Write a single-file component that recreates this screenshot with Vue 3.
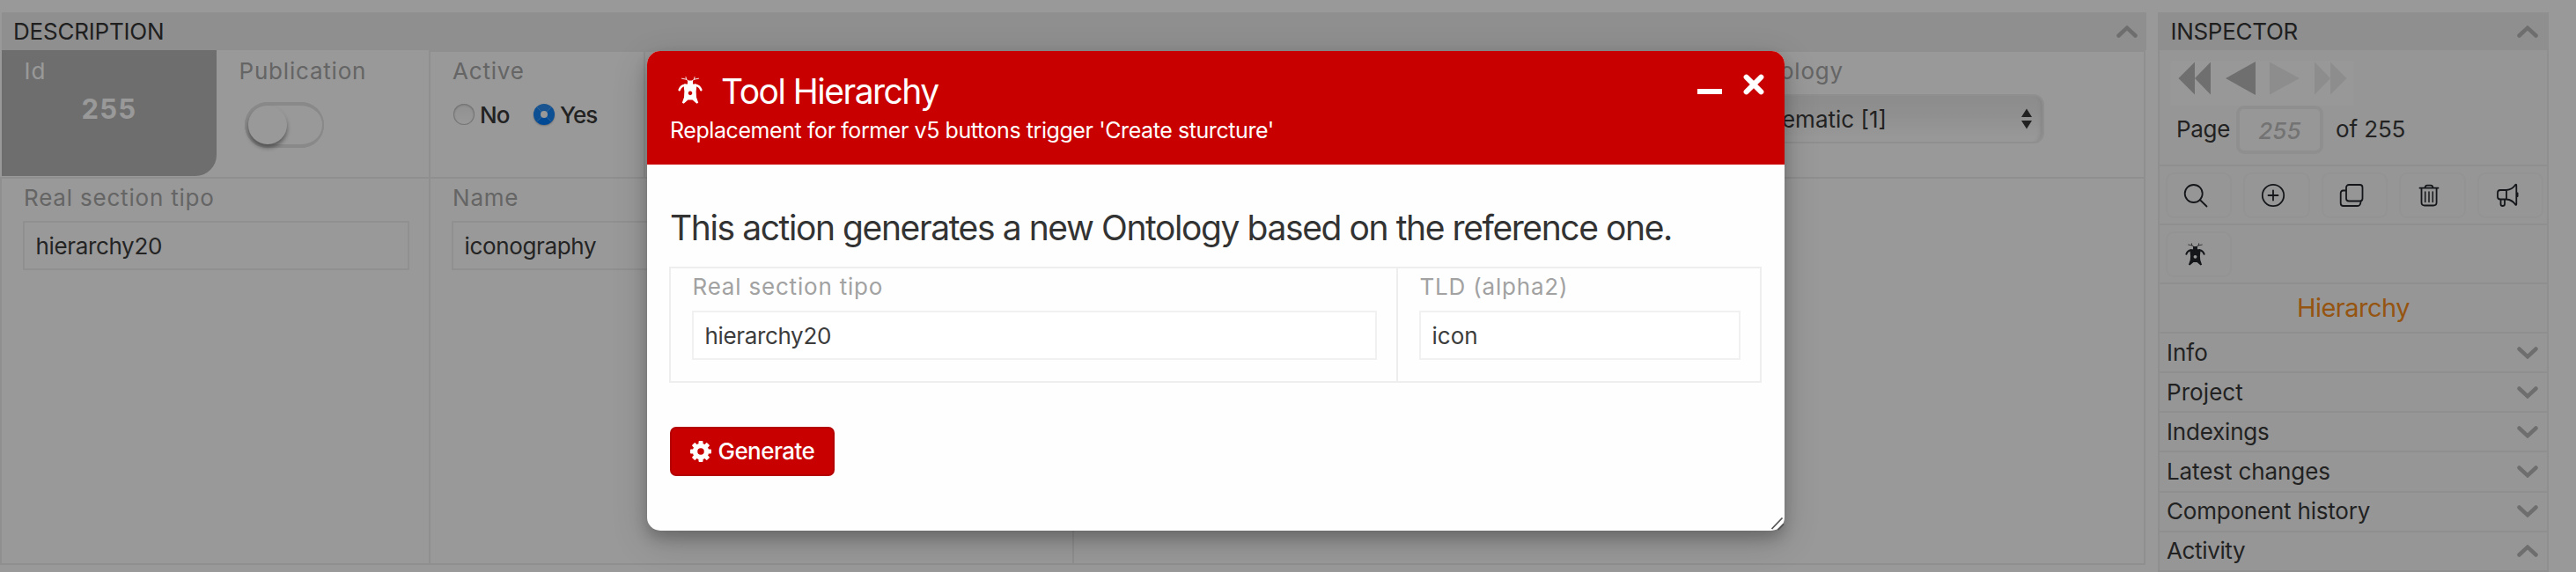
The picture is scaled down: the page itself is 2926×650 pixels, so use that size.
<script setup>
const sections = [
  { name: 'Info', open: false, ls: 0 },
  { name: 'Project', open: false, ls: 0.07 },
  { name: 'Indexings', open: false, ls: -0.2 },
  { name: 'Latest changes', open: false, ls: -0.1 },
  { name: 'Component history', open: false, ls: -0.21 },
  { name: 'Activity', open: true, ls: -0.36 },
]
const bugBody =
  'M11 4.5h6v4h3.5q1 0 .8 2q-1.2 7-.3 13l2.2 6.2-1.8 1-4.9-4.2h-5L6.6 30.7l-1.8-1L7 23.5q.9-6-.3-13q-.2-2 .8-2H11zM14 16.6a2.3 2.3 0 1 0 .01 0z'
const bugLimbs = 'M8 9.8Q3.2 10.600 1.700 15.200M20 9.8Q24.800 10.600 26.300 15.200'
const bugAntennae = 'M4.500 2.200L9.500 3.200L12 5M9 .6L9.500 3.200M23.500 2.200L18.500 3.200L16 5M19 .6L18.500 3.200'
const cogTeeth = [0, 45, 90, 135, 180, 225, 270, 315]
</script>

<template>
  <div class="page">
    <div class="layout">
      <section class="panel">
        <header class="panel-head">
          <h2 class="panel-title">DESCRIPTION</h2>
          <svg class="chevron" viewBox="0 0 24 14"><path d="M2.500 11.500L12 2.700L21.500 11.500" /></svg>
        </header>

        <div class="row row-first">
          <div class="cell-id">
            <div class="id-box">
              <div class="id-label">Id</div>
              <div class="id-value">255</div>
            </div>
            <div class="publication">
              <div class="label">Publication</div>
              <div class="toggle"><span class="knob"></span></div>
            </div>
          </div>
          <div class="cell cell-active">
            <div class="label">Active</div>
            <div class="radios">
              <span class="radio"></span><span class="radio-text no">No</span>
              <span class="radio checked"></span><span class="radio-text yes">Yes</span>
            </div>
          </div>
          <div class="cell cell-typology">
            <div class="label typology-label">Typology</div>
            <div class="select">
              <span class="select-value">Thematic [1]</span>
              <svg class="select-arrows" viewBox="0 0 12 24"><path d="M6 .5L12 10H0zM6 23.500L12 14H0z" /></svg>
            </div>
          </div>
        </div>

        <div class="row row-second">
          <div class="cell cell-tipo">
            <div class="label">Real section tipo</div>
            <div class="input tight">hierarchy20</div>
          </div>
          <div class="cell cell-name">
            <div class="label">Name</div>
            <div class="input tight">iconography</div>
          </div>
          <div class="cell cell-rest"></div>
        </div>
      </section>

      <aside class="inspector">
        <header class="inspector-head">
          <h2 class="inspector-title">INSPECTOR</h2>
          <svg class="chevron" viewBox="0 0 24 14"><path d="M2.500 11.500L12 2.700L21.500 11.500" /></svg>
        </header>
        <div class="paginator">
          <div class="nav">
            <svg width="208" height="53" viewBox="0 0 208 53">
              <path class="nav-on" d="M8.500 20L27 1.500V38.500zM27 20L45 1.500V38.500zM62 20L96 1V39z" />
              <path class="nav-off" d="M146 20L112 1.500V38.500zM181 20L163 1.500V38.500zM199.500 20L181 1.500V38.500z" />
            </svg>
          </div>
          <div class="page-line">
            <span class="page-word">Page</span>
            <span class="page-input">255</span>
            <span class="page-total">of 255</span>
          </div>
        </div>
        <div class="tools">
          <div class="tool">
            <svg viewBox="0 0 28 28"><circle cx="11.700" cy="12" r="10" /><path d="M18.800 19L26.500 26.500" /></svg>
          </div>
          <div class="tool">
            <svg viewBox="0 0 28 28"><circle cx="14" cy="14" r="12.200" /><path d="M14 8.500V19.500M8.500 14H19.500" /></svg>
          </div>
          <div class="tool">
            <svg viewBox="0 0 28 28">
              <rect x="8" y="2" width="18.500" height="18.500" rx="3" />
              <path d="M7 8.500H4.500Q1.700 8.500 1.700 11.500V23Q1.700 26 4.700 26H21Q24 26 24.500 21.500" />
            </svg>
          </div>
          <div class="tool">
            <svg viewBox="0 0 28 28">
              <path d="M3.500 5.700H24.500M9.500 5Q10 2.700 12 2.700H16Q18 2.700 18.500 5M5.500 6V22Q5.500 25.500 9 25.500H19Q22.600 25.500 22.600 22V6" />
              <path class="thin" d="M9.700 10V21.500M14 10V21.500M18.300 10V21.500" />
            </svg>
          </div>
          <div class="tool">
            <svg viewBox="0 0 28 28">
              <path d="M13 8H6Q3 8 3 11V15.500Q3 18.500 6 18.500H13ZM13 8Q19.500 7.500 23.200 2Q24.300 1 24.300 3V23.500Q24.300 25.500 23.200 24.500Q19.500 19 13 18.500M6.500 18.500V24Q6.500 26 8.500 26Q11 26 11 24V18.500M25.600 11.500V15" />
            </svg>
          </div>
        </div>
        <div class="tools second">
          <div class="tool">
            <svg class="bug-dark" viewBox="0 0 28 31">
              <path class="fill" fill-rule="evenodd" :d="bugBody" />
              <path class="limb" :d="bugLimbs" />
              <path class="hair" :d="bugAntennae" />
            </svg>
          </div>
        </div>
        <div class="section-name">Hierarchy</div>
        <div v-for="s in sections" :key="s.name" class="item">
          <span :style="{ letterSpacing: s.ls + 'px' }">{{ s.name }}</span>
          <svg class="chevron" viewBox="0 0 24 14">
            <path :d="s.open ? 'M2.500 11.500L12 2.700L21.500 11.500' : 'M2.500 2.500L12 11.300L21.500 2.500'" />
          </svg>
        </div>
      </aside>
    </div>

    <div class="overlay">
      <div class="modal">
        <header class="modal-head">
          <div class="modal-titles">
            <div class="modal-title-line">
              <svg class="bug-light" viewBox="0 0 28 31">
                <path class="fill" fill-rule="evenodd" :d="bugBody" />
                <path class="limb" :d="bugLimbs" />
                <path class="hair" :d="bugAntennae" />
              </svg>
              <h1 class="modal-title">Tool Hierarchy</h1>
            </div>
            <p class="modal-sub">Replacement for former v5 buttons trigger 'Create sturcture'</p>
          </div>
          <div class="window-controls">
            <span class="minimize"></span>
            <svg class="close" viewBox="0 0 24 24"><path d="M3.600 3.600L20.400 20.400M20.400 3.600L3.600 20.400" /></svg>
          </div>
        </header>
        <div class="modal-body">
          <h3 class="statement">This action generates a new Ontology based on the reference one.</h3>
          <div class="fields">
            <div class="field field-tipo">
              <div class="label">Real section tipo</div>
              <div class="input tight">hierarchy20</div>
            </div>
            <div class="field field-tld">
              <div class="label">TLD (alpha2)</div>
              <div class="input">icon</div>
            </div>
          </div>
          <button class="generate">
            <svg class="cog" viewBox="0 0 24 24">
              <circle cx="12" cy="12" r="6.500" />
              <rect v-for="a in cogTeeth" :key="a" x="9.500" y="0" width="5" height="4.500" rx="1" :transform="`rotate(${a} 12 12)`" />
            </svg>
            <span>Generate</span>
          </button>
        </div>
        <svg class="resizer" viewBox="0 0 16 16"><path d="M1.500 14L13.500 1.500M8.500 15L15 8.500" /></svg>
      </div>
    </div>
  </div>
</template>

<style>
body {
  background: #999;
}
</style>

<style scoped>
.page,
.page * {
  box-sizing: border-box;
}
.page {
  position: relative;
  width: 2926px;
  height: 650px;
  overflow: hidden;
  background: #fff;
  color: #393939;
  font: 400 26px/31px Inter, 'Liberation Sans', sans-serif;
}
h1,
h2,
h3,
p {
  margin: 0;
  font-weight: 400;
}
.layout {
  display: flex;
  gap: 13px;
  padding-top: 14px;
}
.panel {
  width: 2438px;
}
.panel-head {
  display: flex;
  justify-content: space-between;
  height: 43px;
  margin-left: 2px;
  padding: 6px 10px 0 13px;
  background: #eee;
}
.panel-title,
.inspector-title {
  font-size: 26px;
  letter-spacing: -0.2px;
  color: #353535;
}
.inspector-title {
  letter-spacing: -0.3px;
}
.chevron {
  width: 24px;
  height: 14px;
  margin-top: 9px;
  fill: none;
  stroke: #b8b8b8;
  stroke-width: 4.500;
  stroke-linecap: round;
}
.row {
  display: flex;
  width: 2437px;
}
.row-first {
  height: 146px;
  border-bottom: 2px solid #eee;
}
.row-second {
  height: 439px;
  border-left: 2px solid #eee;
  border-bottom: 2px solid #eee;
}
.cell {
  padding: 6px 24px 0;
  border-right: 2px solid #eee;
}
.label {
  padding-left: 1px;
  color: #a8a8a8;
  letter-spacing: 0.8px;
  white-space: nowrap;
}
.input {
  height: 56px;
  margin-top: 11px;
  padding: 11px 12.500px 0;
  border: 2px solid #f1f1f1;
  color: #3c3c3c;
}
.tight {
  letter-spacing: -0.35px;
}
.cell-id {
  display: flex;
  width: 489px;
  padding-left: 2px;
  border-right: 2px solid #eee;
}
.id-box {
  width: 244px;
  height: 143px;
  padding-top: 8px;
  border-radius: 0 0 24px 0;
  background: #b8b8b8;
  color: #fff;
}
.id-label {
  padding-left: 25.500px;
  letter-spacing: 1px;
}
.id-value {
  margin-top: 9px;
  font-size: 31px;
  font-weight: 700;
  line-height: 37px;
  letter-spacing: 1.200px;
  text-align: center;
}
.publication {
  padding: 8px 0 0 24.500px;
}
.toggle {
  width: 90px;
  height: 52px;
  margin: 20px 0 0 7.500px;
  padding: 4px;
  border-radius: 26px;
  box-shadow: inset 1px 0 0 3px #e4e4e4, inset 0 4px #e4e4e4, inset 0 -4px #e4e4e4;
}
.knob {
  display: block;
  width: 44px;
  height: 44px;
  border-radius: 50%;
  background: #fff;
  box-shadow: 0 4px 5px rgba(0, 0, 0, 0.4);
}
.cell-active {
  width: 244px;
  border-top: 2px solid #eee;
}
.radios {
  display: flex;
  margin-top: 19px;
  padding-left: 2px;
}
.radio {
  width: 24px;
  height: 24px;
  margin-top: 3px;
  border-radius: 50%;
  background: linear-gradient(#f2f2f2, #fff);
  box-shadow: inset 0 0 0 1px #c4c4c4, inset 0 1px 3px #bbb;
}
.radio.checked {
  border: 8px solid #0f80f0;
  border-color: #2a8df0 #1484f5 #007af8;
  background: #fff;
  box-shadow: 0 1px 2px #bbb;
}
.radio-text {
  padding-left: 6px;
  font-weight: 500;
  letter-spacing: -0.9px;
}
.no {
  width: 67px;
}
.cell-typology {
  width: 1704px;
  border-top: 2px solid #eee;
  padding: 6px 0 0;
}
.typology-label {
  width: 1361px;
  text-align: right;
}
.select {
  display: flex;
  width: 340px;
  height: 56px;
  margin: 11px 0 0 1249px;
  padding: 11px 0 0;
  border: 2px solid #eee;
  border-radius: 12px;
  background: linear-gradient(#ebebeb, #eee 35%, #fbfbfb 80%, #fff);
  box-shadow: inset -6px 0 5px -4px #ddd;
}
.select-value {
  width: 159px;
  text-align: right;
  white-space: nowrap;
}
.select-arrows {
  width: 12px;
  height: 24px;
  margin: 3px 0 0 153px;
  fill: #3a3a3a;
}
.cell-tipo {
  width: 487px;
  padding-right: 22px;
}
.cell-name {
  width: 731px;
}
.cell-rest {
  flex: 1;
}

.inspector {
  width: 444px;
  height: 636px;
  border: 0 solid #eee;
  border-width: 0 2px;
  background: #fbfbfb;
}
.inspector-head {
  display: flex;
  justify-content: space-between;
  height: 43px;
  margin: 0 -2px;
  padding: 6px 12px 0 14.500px;
  background: #eee;
}
.paginator {
  height: 132px;
  padding: 12px 0 0 13px;
  border-bottom: 2px solid #eee;
}
.nav {
  width: 208px;
  height: 51px;
  background: #fdfdfd;
}
.nav svg {
  display: block;
}
.nav-on {
  fill: #b9b9b9;
}
.nav-off {
  fill: #ebebeb;
}
.page-line {
  display: flex;
  padding-left: 6px;
}
.page-word {
  width: 68px;
  margin-top: 11px;
  letter-spacing: -0.3px;
}
.page-input {
  width: 99px;
  height: 55px;
  padding-top: 9px;
  border: 4px solid #efefef;
  border-radius: 9px;
  background: #fcfcfc;
  color: #c0c0c0;
  font-style: italic;
  font-weight: 500;
  letter-spacing: 0.2px;
  text-align: center;
}
.page-total {
  margin: 11px 0 0 14px;
  letter-spacing: -0.12px;
}
.tools {
  display: flex;
  gap: 13px;
  height: 67px;
  padding: 7px 0 0 6.500px;
  border-bottom: 2px solid #eee;
}
.tool {
  width: 75.500px;
  height: 52px;
  padding: 10px 0 0 18px;
  border: 2px solid #f5f5f5;
  border-radius: 9px;
}
.tool svg {
  display: block;
  width: 28px;
  height: 28px;
  fill: none;
  stroke: #22262b;
  stroke-width: 1.800;
  stroke-linecap: round;
  stroke-linejoin: round;
}
.tool .thin {
  stroke-width: 1.500;
}
.tool .bug-dark {
  width: 23px;
  height: 26px;
  margin: 1px 0 0 2.500px;
}
.tool .bug-dark .fill {
  fill: #22262b;
  stroke: none;
}
.tool .limb,
.bug-light .limb {
  stroke-width: 2.600;
}
.tool .hair,
.bug-light .hair {
  stroke-width: 0.900;
}
.section-name {
  height: 56px;
  padding: 9px 0 0;
  border-bottom: 2px solid #eee;
  color: #f98d1b;
  font-size: 29px;
  line-height: 35px;
  letter-spacing: -0.500px;
  text-align: center;
}
.item {
  display: flex;
  justify-content: space-between;
  height: 45.150px;
  padding: 5.500px 10px 0 8px;
  border-bottom: 2px solid #eee;
}

.overlay {
  position: absolute;
  inset: 0;
  padding: 58px 0 0 735px;
  background: rgba(0, 0, 0, 0.4);
}
.modal {
  position: relative;
  width: 1292px;
  height: 545px;
  border-radius: 15px;
  background: #fefefe;
  box-shadow: 0 8px 16px rgba(0, 0, 0, 0.2), 0 12px 40px rgba(0, 0, 0, 0.19);
}
.modal-head {
  display: flex;
  justify-content: space-between;
  height: 129px;
  padding: 22px 23px 0 26px;
  border-radius: 15px 15px 0 0;
  background: #c80000;
  color: #fff;
}
.modal-title-line {
  display: flex;
}
.bug-light {
  width: 28px;
  height: 31px;
  margin: 7px 21px 0 9px;
  fill: none;
  stroke: #fff;
  stroke-linecap: round;
}
.bug-light .fill {
  fill: #fff;
  stroke: none;
}
.modal-title {
  font-size: 39px;
  line-height: 47px;
  letter-spacing: -1.500px;
}
.modal-sub {
  margin-top: 6px;
  font-size: 25px;
  line-height: 30px;
  letter-spacing: -0.420px;
}
.window-controls {
  display: flex;
  gap: 24px;
  padding-top: 4px;
}
.minimize {
  width: 28px;
  height: 6px;
  margin-top: 17px;
  background: #fff;
}
.close {
  width: 24px;
  height: 24px;
  fill: none;
  stroke: #fff;
  stroke-width: 6;
  stroke-linecap: round;
}
.modal-body {
  padding: 48px 26px 0 25px;
}
.statement {
  padding-left: 1px;
  color: #333;
  font-size: 39px;
  line-height: 47px;
  letter-spacing: -1.410px;
  white-space: nowrap;
}
.fields {
  display: flex;
  width: 1241px;
  height: 132px;
  margin-top: 21px;
  border: 2px solid #eee;
}
.field {
  padding: 5px 24px 0;
}
.field .label {
  padding-left: 0.500px;
  color: #a2a2a2;
}
.field .input {
  margin-top: 12px;
  background: #fff;
}
.field-tipo {
  width: 826px;
  padding-right: 22px;
  border-right: 2px solid #eee;
}
.field-tld {
  flex: 1;
  padding-right: 22px;
}
.generate {
  display: flex;
  width: 187px;
  height: 56px;
  margin: 50px 0 0 1px;
  padding: 10px 0 0 21px;
  border: 2px solid #b40000;
  border-radius: 7px;
  background: #c80000;
  color: #fff;
  font: 500 26px/31px Inter, 'Liberation Sans', sans-serif;
  letter-spacing: -0.550px;
}
.cog {
  width: 24px;
  height: 24px;
  margin: 4px 7.500px 0 0;
  fill: #fff;
}
.cog circle {
  fill: none;
  stroke: #fff;
  stroke-width: 5.500;
}
.resizer {
  position: absolute;
  right: 0;
  bottom: 0;
  width: 16px;
  height: 16px;
  fill: none;
  stroke: #555;
  stroke-width: 1.800;
}
</style>
